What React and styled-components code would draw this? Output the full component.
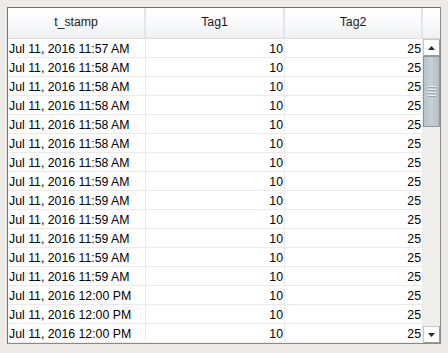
import React from "react";
import styled, { createGlobalStyle } from "styled-components";

const GlobalStyle = createGlobalStyle`
  html, body {
    margin: 0;
    padding: 0;
    background: #ecebe7;
  }
  body {
    font-family: "Liberation Sans", Arial, sans-serif;
  }
`;

const Page = styled.div`
  width: 448px;
  height: 353px;
  box-sizing: border-box;
  padding: 7px 0 0 7px;
`;

const Frame = styled.div`
  width: 434px;
  height: 337px;
  box-sizing: border-box;
  border: 1px solid #8a8a8a;
  border-top-color: #6f6f6f;
  border-left-color: #6f6f6f;
  background: #ffffff;
  display: flex;
  flex-direction: column;
`;

const Header = styled.div`
  display: grid;
  grid-template-columns: 138px 139px 138px 17px;
  height: 31px;
  box-sizing: border-box;
  border-bottom: 1px solid #dcdcdc;
`;

const HeadCell = styled.div`
  display: flex;
  align-items: center;
  justify-content: center;
  font-size: 12.3px;
  color: #1a1a1a;
  background: linear-gradient(#ffffff 0%, #fbfbfc 40%, #eef0f3 100%);
  border-right: ${(p) => (p.last ? "none" : "2px solid #e4e4e4")};
  box-sizing: border-box;
  padding-bottom: 2px;
`;

const Body = styled.div`
  display: flex;
  flex: 1;
  min-height: 0;
`;

const Rows = styled.div`
  flex: 1;
  overflow: hidden;
`;

const Row = styled.div`
  display: grid;
  grid-template-columns: 138px 139px 138px;
  height: 19px;
  box-sizing: border-box;
  border-bottom: 1px solid #ebebeb;
`;

const Cell = styled.div`
  font-size: 12.3px;
  line-height: 16px;
  padding-top: 2px;
  color: #000;
  padding-left: 1px;
  padding-right: 1px;
  text-align: ${(p) => (p.num ? "right" : "left")};
  border-right: 1px solid #ebebeb;
  white-space: nowrap;
  overflow: hidden;
`;

const Scrollbar = styled.div`
  width: 17px;
  display: flex;
  flex-direction: column;
  background: #efeeea;
`;

const ArrowBtn = styled.div`
  height: 17px;
  flex-shrink: 0;
  box-sizing: border-box;
  border: 1px solid #9a9a9a;
  border-top-color: #c8c8c8;
  border-left-color: #c8c8c8;
  background: #ffffff;
  display: flex;
  align-items: center;
  justify-content: center;
`;

const Thumb = styled.div`
  height: 71px;
  flex-shrink: 0;
  box-sizing: border-box;
  border: 1px solid #8e979c;
  background: linear-gradient(90deg, #b7c2c8 0%, #c6d0d5 45%, #b4bfc5 100%);
  display: flex;
  flex-direction: column;
  align-items: center;
  justify-content: center;
  gap: 1px;
`;

const Grip = styled.div`
  width: 8px;
  height: 1px;
  background: #e8eef1;
  border-bottom: 1px solid #98a3a9;
`;

const Track = styled.div`
  flex: 1;
`;

const Arrow = ({ down }) => (
  <svg width="7" height="4" viewBox="0 0 7 4">
    <path d={down ? "M0 0H7L3.5 4Z" : "M0 4H7L3.5 0Z"} fill="#2a2a2a" />
  </svg>
);

const rows = [
  "Jul 11, 2016 11:57 AM",
  "Jul 11, 2016 11:58 AM",
  "Jul 11, 2016 11:58 AM",
  "Jul 11, 2016 11:58 AM",
  "Jul 11, 2016 11:58 AM",
  "Jul 11, 2016 11:58 AM",
  "Jul 11, 2016 11:58 AM",
  "Jul 11, 2016 11:59 AM",
  "Jul 11, 2016 11:59 AM",
  "Jul 11, 2016 11:59 AM",
  "Jul 11, 2016 11:59 AM",
  "Jul 11, 2016 11:59 AM",
  "Jul 11, 2016 11:59 AM",
  "Jul 11, 2016 12:00 PM",
  "Jul 11, 2016 12:00 PM",
  "Jul 11, 2016 12:00 PM",
];

export default function App() {
  return (
    <>
      <GlobalStyle />
      <Page>
        <Frame>
          <Header>
            <HeadCell>t_stamp</HeadCell>
            <HeadCell>Tag1</HeadCell>
            <HeadCell>Tag2</HeadCell>
            <HeadCell last />
          </Header>
          <Body>
            <Rows>
              {rows.map((t, i) => (
                <Row key={i}>
                  <Cell>{t}</Cell>
                  <Cell num>10</Cell>
                  <Cell num>25</Cell>
                </Row>
              ))}
            </Rows>
            <Scrollbar>
              <ArrowBtn>
                <Arrow />
              </ArrowBtn>
              <Thumb>
                <Grip />
                <Grip />
                <Grip />
                <Grip />
              </Thumb>
              <Track />
              <ArrowBtn>
                <Arrow down />
              </ArrowBtn>
            </Scrollbar>
          </Body>
        </Frame>
      </Page>
    </>
  );
}
